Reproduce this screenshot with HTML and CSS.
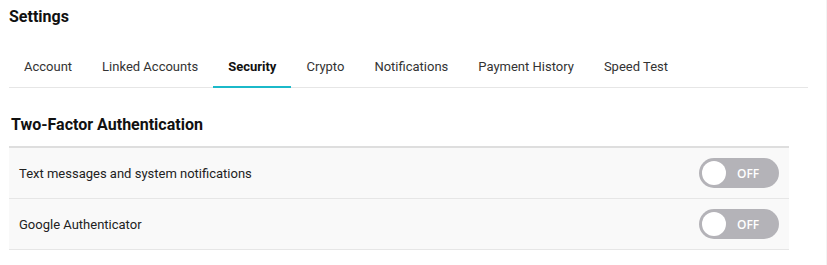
FILE: index.html
```html
<!DOCTYPE html>
<html lang="en">
<head>
    <meta charset="UTF-8">
    <meta name="viewport" content="width=device-width, initial-scale=1.0">
    <title>Settings</title>
    <link rel="stylesheet" href="styles.css">
</head>
<body>
    <div class="page">
        <h1 class="page-title">Settings</h1>
        <nav class="tabs">
            <a class="tab">Account</a>
            <a class="tab">Linked Accounts</a>
            <a class="tab active">Security</a>
            <a class="tab">Crypto</a>
            <a class="tab">Notifications</a>
            <a class="tab">Payment History</a>
            <a class="tab">Speed Test</a>
        </nav>
        <section class="section">
            <h2 class="section-title">Two-Factor Authentication</h2>
            <div class="option-list">
                <div class="option-row">
                    <span>Text messages and system notifications</span>
                    <div class="toggle"><span class="knob"></span><span class="toggle-label">OFF</span></div>
                </div>
                <div class="option-row">
                    <span>Google Authenticator</span>
                    <div class="toggle"><span class="knob"></span><span class="toggle-label">OFF</span></div>
                </div>
            </div>
        </section>
    </div>
</body>
</html>
```
FILE: styles.css
```css
body, html {
    margin: 0;
    padding: 0;
    background-color: #fff;
    color: #222;
    font-family: Roboto, Arial, sans-serif;
}

.page {
    padding: 0 18px 0 9px;
    border-right: 1px solid #f3f3f3;
    height: 265px;
    box-sizing: border-box;
}

.page-title {
    font-size: 16px;
    font-weight: bold;
    margin: 0;
    padding-top: 7px;
    line-height: 20px;
    color: #111;
}

.tabs {
    display: flex;
    border-bottom: 1px solid #e6e6e6;
    margin-top: 32px;
}

.tab {
    font-size: 13px;
    color: #333;
    padding: 0 15px;
    line-height: 16px;
    padding-bottom: 11px;
    border-bottom: 2px solid transparent;
    margin-bottom: -1px;
    cursor: pointer;
}

.tab.active {
    font-weight: bold;
    color: #111;
    border-bottom-color: #1bb9c9;
}

.section {
    width: 780px;
}

.section-title {
    font-size: 16px;
    font-weight: bold;
    margin: 0;
    padding: 28px 2px 12px;
    line-height: 18px;
    color: #111;
}

.option-list {
    border-top: 2px solid #dedede;
}

.option-row {
    display: flex;
    justify-content: space-between;
    align-items: center;
    height: 50px;
    padding: 0 10px;
    background-color: #f9f9f9;
    border-bottom: 1px solid #e6e6e6;
    font-size: 13px;
    color: #222;
}

.toggle {
    display: flex;
    align-items: center;
    width: 80px;
    height: 30px;
    border-radius: 15px;
    background-color: #b4b3b8;
    box-sizing: border-box;
    padding-left: 3px;
}

.knob {
    width: 24px;
    height: 24px;
    border-radius: 50%;
    background-color: #fff;
}

.toggle-label {
    color: #fff;
    font-family: "Open Sans", Arial, sans-serif;
    font-size: 12px;
    font-weight: 600;
    margin-left: 11px;
}
```
